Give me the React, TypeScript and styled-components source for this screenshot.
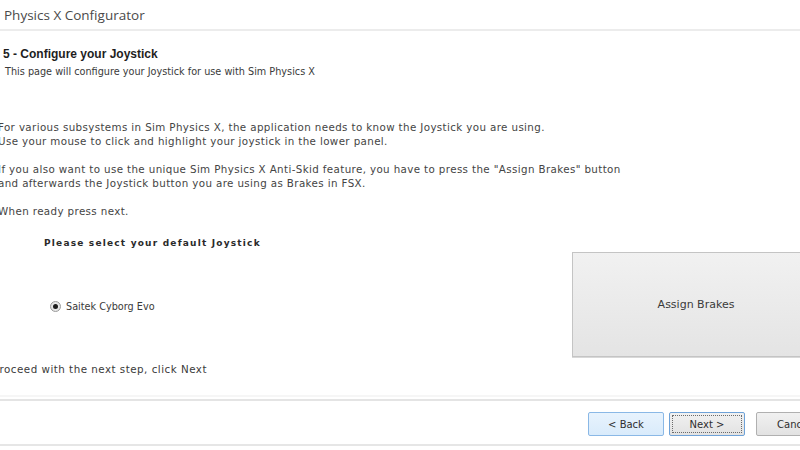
import React from "react";
import styled, { createGlobalStyle } from "styled-components";

const Global = createGlobalStyle`
  html, body { margin: 0; padding: 0; background: #ffffff; overflow: hidden; }
  #root { width: 800px; height: 450px; overflow: hidden; }
`;

const Window = styled.div`
  width: 840px;
  height: 450px;
  display: flex;
  flex-direction: column;
  background: #ffffff;
  font-family: "DejaVu Sans", Tahoma, sans-serif;
  color: #3a3a3a;
`;

const TitleBar = styled.div`
  height: 29px;
  display: flex;
  align-items: center;
  padding-left: 4px;
  border-bottom: 2px solid #ececec;
  font-family: "Open Sans", "Segoe UI", sans-serif;
  font-size: 13.5px;
  color: #4a4a4a;
`;

const Header = styled.div`
  height: 89px;
  padding: 15px 0 0 3px;
  box-sizing: border-box;
  display: flex;
  flex-direction: column;
`;

const Heading = styled.div`
  font-family: "Liberation Sans", Arial, sans-serif;
  font-weight: bold;
  font-size: 12px;
  line-height: 16px;
  color: #1e1e1e;
`;

const Subtitle = styled.div`
  font-family: "DejaVu Sans", Tahoma, sans-serif;
  font-size: 9.7px;
  line-height: 14px;
  margin-top: 3px;
  padding-left: 2px;
  color: #3a3a3a;
`;

const Body = styled.div`
  flex: 1;
  display: flex;
  flex-direction: column;
`;

const Paragraphs = styled.div`
  display: flex;
  flex-direction: column;
  gap: 14px;
`;

const Para = styled.p`
  margin: 0 0 0 -2px;
  font-size: 10.3px;
  line-height: 14px;
  color: #444;
  letter-spacing: 0.38px;
  white-space: nowrap;
`;

const Selection = styled.div`
  height: 144px;
  display: flex;
`;

const LeftCol = styled.div`
  flex: 1;
  display: flex;
  flex-direction: column;
`;

const SelectLabel = styled.div`
  margin: 19px 0 0 44px;
  font-family: "DejaVu Sans", Verdana, sans-serif;
  font-weight: bold;
  font-size: 9px;
  line-height: 12px;
  letter-spacing: 1.2px;
  color: #2a2a2a;
`;

const RadioRow = styled.label`
  margin: 50px 0 0 50px;
  display: flex;
  align-items: center;
  gap: 5px;
  height: 14px;
  font-size: 9.7px;
  color: #3a3a3a;
`;

const RadioOuter = styled.span`
  width: 11px;
  height: 11px;
  box-sizing: border-box;
  border-radius: 50%;
  border: 1px solid #9a9a9a;
  background: radial-gradient(circle, #f4f4f4 0%, #dcdcdc 100%);
  display: flex;
  align-items: center;
  justify-content: center;
`;

const RadioDot = styled.span`
  width: 5px;
  height: 5px;
  border-radius: 50%;
  background: #1c1c1c;
`;

const AssignButton = styled.button`
  margin: 34px 20px 0 0;
  width: 248px;
  height: 105px;
  border: 1px solid #c4c4c4;
  border-radius: 0;
  background: linear-gradient(#f1f1f1, #e4e4e4);
  font-family: "DejaVu Sans", Tahoma, sans-serif;
  font-size: 11px;
  color: #3a3a3a;
  padding: 0;
  box-shadow: 0 1px 0 #d8d8d8;
`;

const FooterNote = styled.div`
  margin-left: -7px;
  font-size: 10.3px;
  letter-spacing: 0.5px;
  line-height: 14px;
  color: #3a3a3a;
`;

const Divider = styled.div`
  height: 2px;
  background: #e4e4e4;
  box-shadow: 0 -4px 0 #f6f6f6;
`;

const ButtonBar = styled.div`
  height: 45px;
  box-sizing: border-box;
  padding: 11px 8px 0 0;
  display: flex;
  justify-content: flex-end;
  align-items: flex-start;
  border-bottom: 2px solid #e6e6e6;
`;

const WizButton = styled.button<{ $variant?: "hover" | "focus" | "normal"; $ml?: number }>`
  width: 76px;
  height: 24px;
  margin-left: ${(p) => p.$ml ?? 0}px;
  box-sizing: border-box;
  border-radius: 2px;
  font-family: "DejaVu Sans", Tahoma, sans-serif;
  font-size: 10px;
  color: #2e2e2e;
  padding: 0;
  position: relative;
  border: 1px solid
    ${(p) => (p.$variant === "hover" ? "#8ab8e6" : p.$variant === "focus" ? "#6ea2d8" : "#b0b0b0")};
  background: ${(p) =>
    p.$variant === "hover"
      ? "linear-gradient(#e8f3fd, #d9ebfb)"
      : "linear-gradient(#f1f1f1, #e2e2e2)"};
  ${(p) =>
    p.$variant === "focus" &&
    `&::after {
      content: "";
      position: absolute;
      inset: 2px;
      border: 1px dotted #6b6b6b;
    }`}
`;

const BottomSpace = styled.div`
  height: 4px;
`;

export default function App() {
  return (
    <>
      <Global />
      <Window>
        <TitleBar>Physics X Configurator</TitleBar>
        <Header>
          <Heading>5 - Configure your Joystick</Heading>
          <Subtitle>This page will configure your Joystick for use with Sim Physics X</Subtitle>
        </Header>
        <Body>
          <Paragraphs>
            <Para>
              For various subsystems in Sim Physics X, the application needs to know the Joystick you are using.
              <br />
              Use your mouse to click and highlight your joystick in the lower panel.
            </Para>
            <Para>
              If you also want to use the unique Sim Physics X Anti-Skid feature, you have to press the "Assign Brakes" button
              <br />
              and afterwards the Joystick button you are using as Brakes in FSX.
            </Para>
            <Para>When ready press next.</Para>
          </Paragraphs>
          <Selection>
            <LeftCol>
              <SelectLabel>Please select your default Joystick</SelectLabel>
              <RadioRow>
                <RadioOuter>
                  <RadioDot />
                </RadioOuter>
                Saitek Cyborg Evo
              </RadioRow>
            </LeftCol>
            <AssignButton>Assign Brakes</AssignButton>
          </Selection>
          <FooterNote>Proceed with the next step, click Next</FooterNote>
        </Body>
        <Divider />
        <ButtonBar>
          <WizButton $variant="hover">&lt; Back</WizButton>
          <WizButton $variant="focus" $ml={5}>Next &gt;</WizButton>
          <WizButton $variant="normal" $ml={11}>Cancel</WizButton>
        </ButtonBar>
        <BottomSpace />
      </Window>
    </>
  );
}
